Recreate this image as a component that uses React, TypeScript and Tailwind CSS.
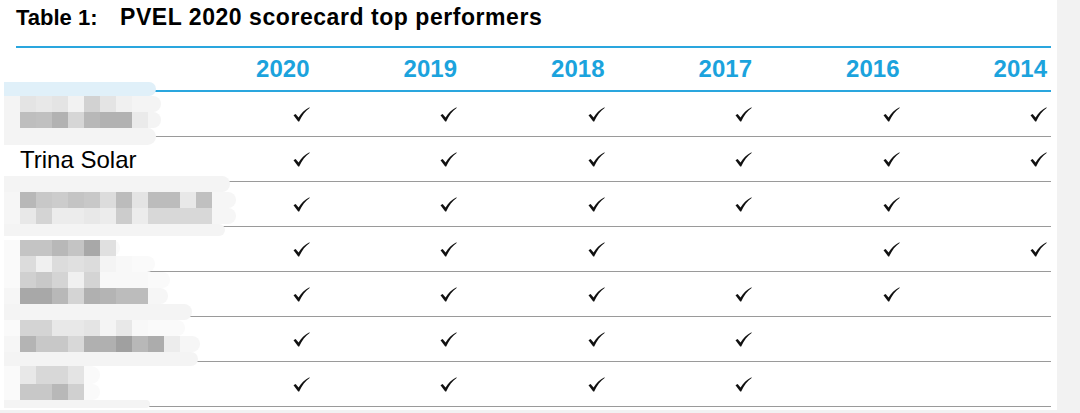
const years = ['2020', '2019', '2018', '2017', '2016', '2014'];

const rows: { name?: string; checks: boolean[] }[] = [
  { checks: [true, true, true, true, true, true] },
  { name: 'Trina Solar', checks: [true, true, true, true, true, true] },
  { checks: [true, true, true, true, true, false] },
  { checks: [true, true, true, false, true, true] },
  { checks: [true, true, true, true, true, false] },
  { checks: [true, true, true, true, false, false] },
  { checks: [true, true, true, true, false, false] },
];

// pixelated redaction blobs: each band is [height, bandColor, cells]
type Band = { h: number; bg: string; w: number; cells?: string[] };
const blobs: { top: number; bands: Band[] }[] = [
  {
    top: 82,
    bands: [
      { h: 14, bg: '#e0f0f9', w: 136 },
      { h: 16, bg: '#f4f4f4', w: 141, cells: ['#e4e4e4', '#e8e8e8', '#e4e4e4', '#f2f2f2', '#d2d2d2', '#e4e4e4', '#f0f0f0', '#f4f4f4'] },
      { h: 16, bg: '#f4f4f4', w: 141, cells: ['#bebebe', '#c0c0c0', '#b2b2b2', '#d6d6d6', '#b8b8b8', '#b2b2b2', '#b2b2b2', '#eaeaea'] },
      { h: 17, bg: '#f4f4f4', w: 136 },
    ],
  },
  {
    top: 176,
    bands: [
      { h: 16, bg: '#f4f4f4', w: 210 },
      { h: 16, bg: '#f6f6f6', w: 216, cells: ['#b8b8b8', '#c8c8c8', '#cccccc', '#c4c4c4', '#c8c8c8', '#dcdcdc', '#bcbcbc', '#e4e4e4', '#bcbcbc', '#bcbcbc', '#e8e8e8', '#c0c0c0'] },
      { h: 16, bg: '#f6f6f6', w: 216, cells: ['#e8e8e8', '#d4d4d4', '#ececec', '#ececec', '#e8e8e8', '#ececec', '#cccccc', '#ececec', '#d8d8d8', '#d8d8d8', '#d8d8d8', '#d8d8d8'] },
      { h: 12, bg: '#f4f4f4', w: 205 },
    ],
  },
  {
    top: 240,
    bands: [
      { h: 16, bg: '#fafafa', w: 100, cells: ['#c4c4c4', '#c4c4c4', '#b8b8b8', '#c4c4c4', '#a8a8a8', '#e0e0e0'] },
      { h: 16, bg: '#fafafa', w: 135, cells: ['#dcdcdc', '#f0f0f0', '#dcdcdc', '#e0e0e0', '#dcdcdc', '#f4f4f4', '#f8f8f8'] },
      { h: 16, bg: '#fafafa', w: 150, cells: ['#d0d0d0', '#c8c8c8', '#d4d4d4', '#f0f0f0', '#d4d4d4', '#f8f8f8', '#f8f8f8', '#f8f8f8'] },
      { h: 16, bg: '#f6f6f6', w: 148, cells: ['#a8a8a8', '#a8a8a8', '#b8b8b8', '#d4d4d4', '#b0b0b0', '#b4b4b4', '#bcbcbc', '#bcbcbc'] },
      { h: 16, bg: '#f4f4f4', w: 172 },
      { h: 16, bg: '#fafafa', w: 165, cells: ['#d4d4d4', '#d4d4d4', '#e8e8e8', '#e8e8e8', '#e4e4e4', '#f4f4f4', '#e8e8e8', '#f8f8f8'] },
      { h: 16, bg: '#f6f6f6', w: 180, cells: ['#b4b4b4', '#c8c8c8', '#c8c8c8', '#d8d8d8', '#b0b0b0', '#b0b0b0', '#a0a0a0', '#b8b8b8', '#acacac', '#ececec'] },
      { h: 14, bg: '#f4f4f4', w: 178 },
      { h: 18, bg: '#fafafa', w: 80, cells: ['#e8e8e8', '#d8d8d8', '#d8d8d8', '#e4e4e4'] },
      { h: 16, bg: '#fafafa', w: 80, cells: ['#c8c8c8', '#c8c8c8', '#b8b8b8', '#d0d0d0'] },
      { h: 8, bg: '#f4f4f4', w: 130 },
    ],
  },
];

function Check() {
  return (
    <svg width="17" height="15" viewBox="0 0 17 15" className="block">
      <path
        d="M0.5 8.2 L2.6 6.9 L5.6 10.4 C8.4 6 11.8 2.6 16.5 0.3 L16.6 0.9 C12.4 3.8 9 8.2 6.2 14.4 L5.2 14.4 Z"
        fill="#111"
      />
    </svg>
  );
}

function Blob({ top, bands }: { top: number; bands: Band[] }) {
  return (
    <div className="absolute left-[4px] flex flex-col" style={{ top }}>
      {bands.map((b, i) => (
        <div
          key={i}
          className="flex pl-[16px] rounded-r-[14px]"
          style={{ height: b.h, width: b.w + 16, background: b.bg }}
        >
          {b.cells?.map((c, j) => (
            <div key={j} className="w-[16px] h-full shrink-0" style={{ background: c }} />
          ))}
        </div>
      ))}
    </div>
  );
}

export default function App() {
  return (
    <div className="w-[1080px] h-[413px] bg-[#f2f2f2] font-['Liberation_Sans',Arial,sans-serif] overflow-hidden">
      <div className="w-[1057px] h-[410px] bg-white relative">
        <div className="h-[46px] pl-[16px] pt-[4px] flex items-baseline font-bold text-black leading-[26px]">
          <span className="w-[104px] text-[22px]">Table 1:</span>
          <span className="text-[23px] tracking-[0.55px]">PVEL 2020 scorecard top performers</span>
        </div>
        <div className="ml-[16px] w-[1035px]">
          <div className="flex h-[46px] border-t-2 border-b-2 border-[#2aa6de] items-center">
            <div className="w-[150px]" />
            {years.map((y) => (
              <div key={y} className="w-[147.5px] text-right pr-[4px] text-[24px] leading-[28px] font-bold text-[#1ba3dd]">
                {y}
              </div>
            ))}
          </div>
          {rows.map((r, i) => (
            <div key={i} className="flex h-[45px] border-b-[1.5px] border-[#9a9a9a] items-center">
              <div className="w-[150px] pl-[4px] text-[24px] leading-[26px] text-black pt-[1px]">{r.name ?? ''}</div>
              {r.checks.map((c, j) => (
                <div key={j} className="w-[147.5px] flex justify-end pr-[4px]">
                  {c && <Check />}
                </div>
              ))}
            </div>
          ))}
        </div>
        {blobs.map((b, i) => (
          <Blob key={i} top={b.top} bands={b.bands} />
        ))}
      </div>
    </div>
  );
}
